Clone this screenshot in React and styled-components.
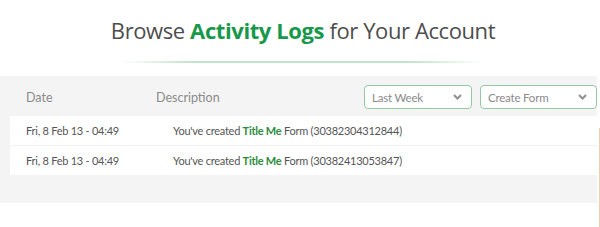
import React from "react";
import styled, { createGlobalStyle } from "styled-components";

const Global = createGlobalStyle`
  html, body { margin: 0; padding: 0; background: #fff; }
  body { font-family: Lato, "Open Sans", sans-serif; }
`;

const Page = styled.div`
  width: 600px;
  height: 227px;
  position: relative;
  overflow: hidden;
  display: flex;
  flex-direction: column;
`;

const Title = styled.h1`
  margin: 0;
  padding-top: 17px;
  height: 46px;
  box-sizing: border-box;
  text-align: center;
  font-family: "Open Sans", Lato, sans-serif;
  font-weight: 400;
  font-size: 22px;
  line-height: 27px;
  color: #4d4d4d;
  letter-spacing: -0.4px;
  padding-left: 6px;
`;

const Accent = styled.span`
  color: #17984a;
  font-weight: 700;
`;

const Divider = styled.div`
  width: 364px;
  height: 2px;
  margin: 15px auto 0 120px;
  background: linear-gradient(
    to right,
    rgba(190, 225, 200, 0) 0%,
    #c4e3cc 20%,
    #c4e3cc 80%,
    rgba(190, 225, 200, 0) 100%
  );
`;

const Panel = styled.section`
  margin-top: 13px;
  width: 597px;
  height: 127px;
  background: #f4f4f4;
  box-sizing: border-box;
  padding-top: 9px;
`;

const HeadRow = styled.div`
  display: flex;
  align-items: center;
  height: 24px;
  padding-left: 26px;
`;

const HeadCell = styled.div`
  width: ${(p) => p.w}px;
  font-size: 12.5px;
  color: #8a8a8a;
`;

const Spacer = styled.div`
  flex: 1;
`;

const Select = styled.div`
  width: ${(p) => p.w}px;
  height: 24px;
  box-sizing: border-box;
  border: 1px solid #93c9a0;
  border-radius: 4px;
  background: #fff;
  display: flex;
  align-items: center;
  justify-content: space-between;
  padding: 0 9px 0 7px;
  margin-left: ${(p) => p.ml || 0}px;
  font-size: 11.5px;
  letter-spacing: -0.2px;
  color: #8a8a8a;
`;

const Chevron = () => (
  <svg width="9" height="6" viewBox="0 0 9 6">
    <path d="M1 1 L4.5 4.5 L8 1" fill="none" stroke="#8f8f8f" strokeWidth="2" />
  </svg>
);

const Rows = styled.div`
  margin: 7px 0 0 10px;
  background: #fff;
`;

const Row = styled.div`
  display: flex;
  align-items: center;
  height: 29px;
  padding-left: 16px;
  font-size: 11px;
  letter-spacing: -0.25px;
  color: #555;
  & + & {
    border-top: 1px solid #f1f1f1;
  }
`;

const DateCell = styled.div`
  width: 147px;
`;

const Name = styled.span`
  color: #2c8c3c;
  font-weight: 700;
`;

const EdgeLine = styled.div`
  position: absolute;
  right: 0;
  top: 128px;
  bottom: 0;
  width: 1px;
  background: #f2cfa6;
`;

const logs = [
  { date: "Fri, 8 Feb 13 - 04:49", id: "30382304312844" },
  { date: "Fri, 8 Feb 13 - 04:49", id: "30382413053847" },
];

export default function App() {
  return (
    <Page>
      <Global />
      <Title>
        Browse <Accent>Activity Logs</Accent> for Your Account
      </Title>
      <Divider />
      <Panel>
        <HeadRow>
          <HeadCell w={130}>Date</HeadCell>
          <HeadCell w={120}>Description</HeadCell>
          <Spacer />
          <Select w={108}>
            <span>Last Week</span>
            <Chevron />
          </Select>
          <Select w={117} ml={8}>
            <span>Create Form</span>
            <Chevron />
          </Select>
        </HeadRow>
        <Rows>
          {logs.map((l) => (
            <Row key={l.id}>
              <DateCell>{l.date}</DateCell>
              <div>
                You've created <Name>Title Me</Name> Form ({l.id})
              </div>
            </Row>
          ))}
        </Rows>
      </Panel>
      <EdgeLine />
    </Page>
  );
}
